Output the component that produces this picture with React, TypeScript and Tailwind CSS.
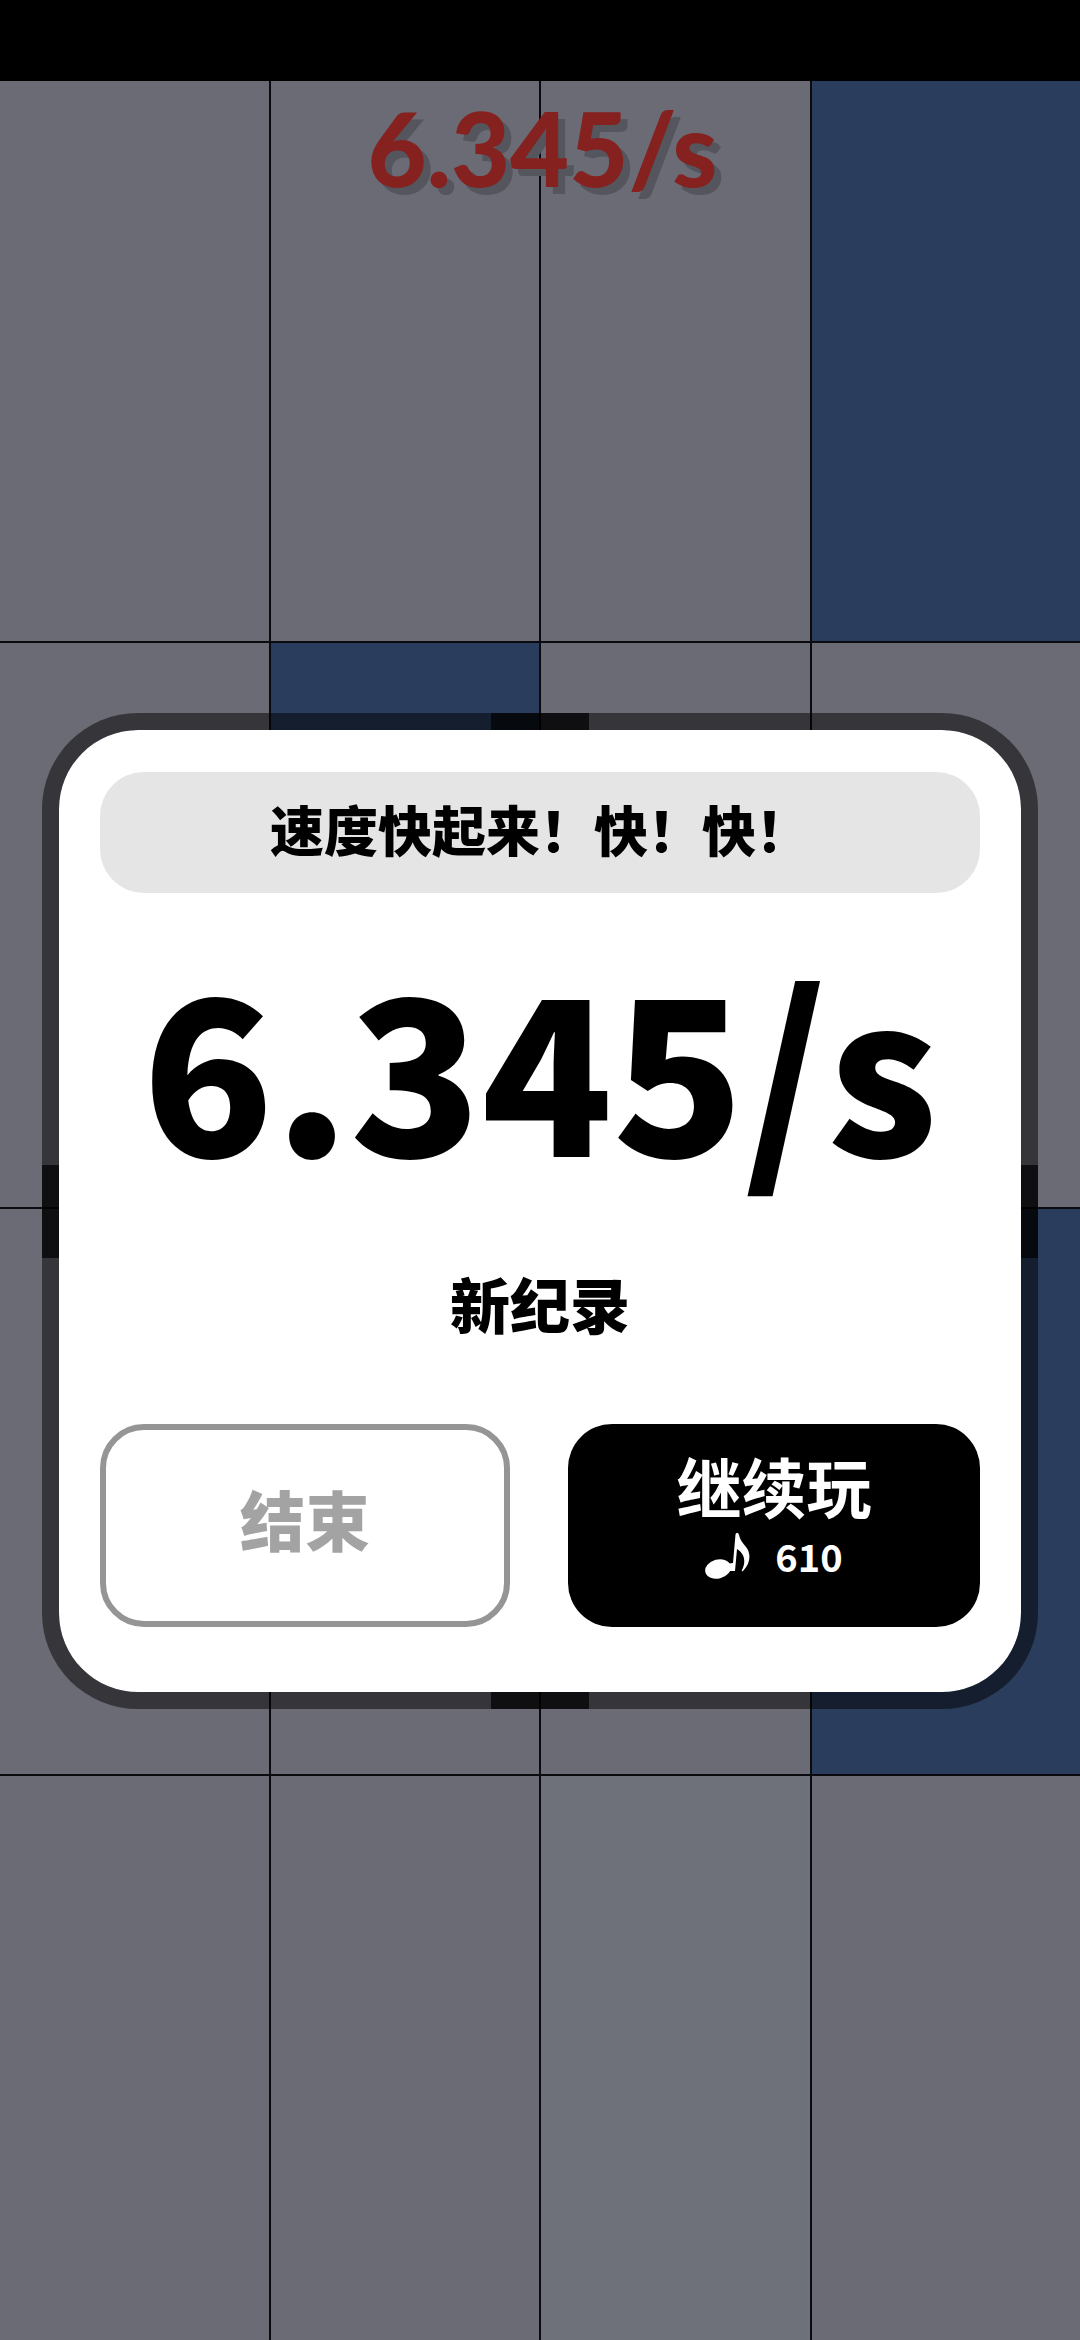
const cells = [
  'border-r-2 border-b-2 bg-[#6b6b75]',
  'border-r-2 border-b-2 bg-[#6b6b75]',
  'border-r-2 border-b-2 bg-[#6b6b75]',
  'border-b-2 bg-[#2b3d5c]',
  'border-r-2 border-b-2 bg-[#6b6b75]',
  'border-r-2 border-b-2 bg-[#2b3d5c]',
  'border-r-2 border-b-2 bg-[#6b6b75]',
  'border-b-2 bg-[#6b6b75]',
  'border-r-2 border-b-2 bg-[#6b6b75]',
  'border-r-2 border-b-2 bg-[#6b6b75]',
  'border-r-2 border-b-2 bg-[#6b6b75]',
  'border-b-2 bg-[#2b3d5c]',
  'border-r-2 bg-[#6b6b75]',
  'border-r-2 bg-[#6b6b75]',
  'border-r-2 bg-[#6e7179]',
  'bg-[#6b6b75]',
];

function MusicNote() {
  return (
    <svg width="46" height="46" viewBox="0 0 46 46" fill="#ffffff">
      <ellipse cx="13" cy="36" rx="13" ry="9.5" transform="rotate(-14 13 36)" />
      <path d="M20 31 L28 30 L30.5 1.5 C31 -0.5 33.5 -0.5 34 2 C35 7 38 10 41 14 C46 20 46 30 38 38 C37 38.5 36.5 38 37 37 C41 29 40 21 32 16 L30 38 L22 38 Z" />
    </svg>
  );
}

function Notch({ className }: { className: string }) {
  return <div className={`absolute bg-black/70 ${className}`} />;
}

export default function App() {
  return (
    <div className="relative flex h-[2340px] w-[1080px] flex-col overflow-hidden bg-black font-['Noto_Sans_CJK_SC',sans-serif]">
      <div className="h-[81px] shrink-0 bg-black" />

      <div className="grid flex-1 grid-cols-[271px_270px_271px_1fr] grid-rows-[562px_566px_567px_1fr]">
        {cells.map((cell, i) => (
          <div key={i} className={`border-[#0b0b0f] ${cell}`} />
        ))}
      </div>

      <div className="absolute top-[81px] left-0 right-0 flex justify-center">
        <span className="ml-[5px] mt-[2px] font-['Lato',sans-serif] text-[102px] leading-[130px] font-black text-[#85211f] [text-shadow:7px_7px_0_#55555d]">
          6.345/s
        </span>
      </div>

      <div className="absolute top-[81px] right-0 bottom-0 left-0 flex items-center justify-center">
        <div className="relative h-[996px] w-[996px] rounded-[96px] border-[17px] border-black/50 bg-white bg-clip-padding">
          <Notch className="top-[-17px] left-[432px] h-[17px] w-[98px]" />
          <Notch className="bottom-[-17px] left-[432px] h-[17px] w-[98px]" />
          <Notch className="top-[435px] left-[-17px] h-[93px] w-[17px]" />
          <Notch className="top-[435px] right-[-17px] h-[93px] w-[17px]" />

          <div className="flex h-full flex-col px-[41px] pt-[42px]">
            <div className="flex h-[121px] items-center justify-center rounded-[44px] bg-[#e5e5e5] pb-[8px] text-[54px] font-black text-black">
              速度快起来！快！快！
            </div>
            <div className="mt-[35px] flex h-[270px] items-center justify-center text-[216px] leading-none font-black text-black">
              6.345/s
            </div>
            <div className="mt-[65px] text-center text-[60px] leading-[80px] font-black text-black">新纪录</div>
            <div className="mt-[81px] flex justify-between">
              <button className="flex h-[203px] w-[410px] items-center justify-center rounded-[44px] border-[6px] border-[#959595] pb-[12px] text-[65px] font-black text-[#a3a3a3]">
                结束
              </button>
              <button className="flex h-[203px] w-[412px] flex-col items-center rounded-[44px] bg-black pt-[26px] text-white">
                <span className="text-[65px] leading-[70px] font-bold">继续玩</span>
                <span className="mt-[13px] flex items-center gap-[24px] text-[38px] leading-[46px] font-bold">
                  <MusicNote />
                  610
                </span>
              </button>
            </div>
          </div>
        </div>
      </div>
    </div>
  );
}
